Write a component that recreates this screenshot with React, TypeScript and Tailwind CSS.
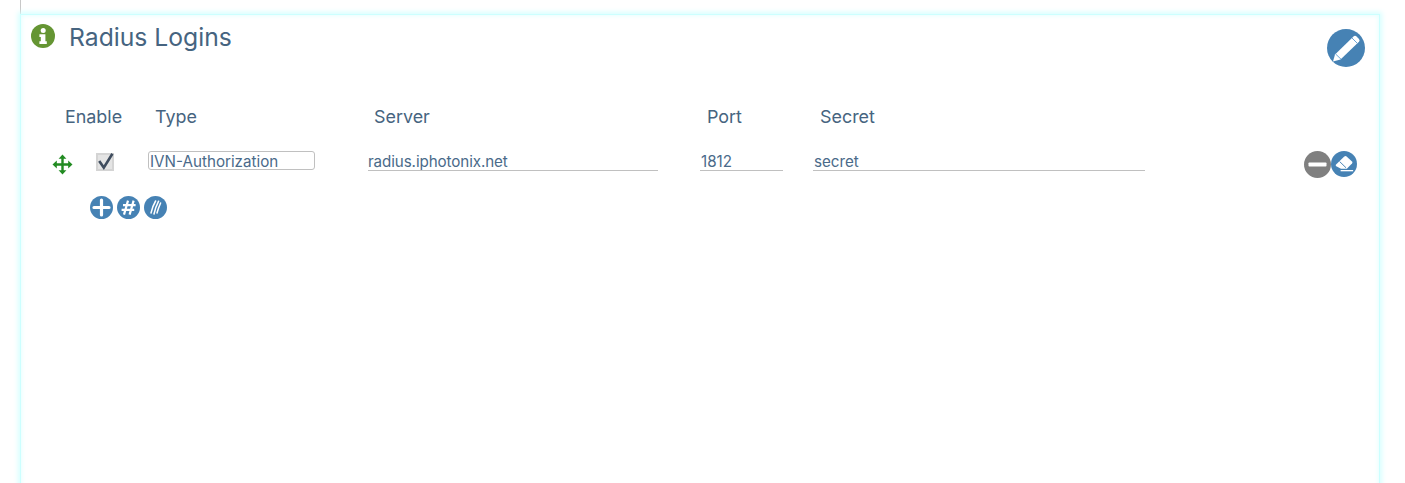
import React from "react";

function Pencil() {
  return (
    <svg viewBox="0 0 38 38" className="w-[38px] h-[38px]">
      <circle cx="19" cy="19" r="19" fill="#4682b4" />
      <path d="M6 32.5 L8 25.5 L26.5 7.5 Q28 6.2 29.5 7.5 L32 10 Q33.2 11.4 32 12.8 L13.5 30.6 Z" fill="#fff" />
      <path d="M8.6 25 L14 30.2 M25 9 L30.4 14.4" stroke="#6aa5d8" strokeWidth="1" fill="none" />
    </svg>
  );
}

function Info() {
  return (
    <svg viewBox="0 0 24 24" className="w-[24px] h-[24px] shrink-0">
      <circle cx="12" cy="12" r="12" fill="#659533" />
      <circle cx="12.2" cy="6.4" r="2.5" fill="#fff" />
      <path d="M8.4 10.2 H14.4 V17.2 H15.8 V20 H8.4 V17.2 H9.8 V13 H8.4 Z" fill="#fff" />
    </svg>
  );
}

function Move() {
  return (
    <svg viewBox="0 0 21 21" className="w-[21px] h-[21px]">
      <path d="M10.5 2 V19 M2 10.5 H19" stroke="#228b22" strokeWidth="2.4" fill="none" />
      <path d="M10.5 0.5 L14.4 4.8 H6.6 Z M10.5 20.5 L14.4 16.2 H6.6 Z M0.5 10.5 L4.8 6.6 V14.4 Z M20.5 10.5 L16.2 6.6 V14.4 Z" fill="#228b22" />
    </svg>
  );
}

function Eraser() {
  return (
    <svg viewBox="0 0 27 27" className="w-[26px] h-[26px] shrink-0">
      <circle cx="13.5" cy="13.5" r="13.5" fill="#4682b4" />
      <path d="M5 14.4 L13.8 5.8 Q15 4.8 16.2 5.8 L21.8 10.8 Q22.8 11.9 21.8 13 L16.4 18.4 H10.4 L5 15.6 Z" fill="#fff" />
      <path d="M9 11 L15.6 17.4" stroke="#4682b4" strokeWidth="1" fill="none" />
      <path d="M10 20.4 H23" stroke="#fff" strokeWidth="1.4" fill="none" />
    </svg>
  );
}

function Minus() {
  return (
    <svg viewBox="0 0 27 27" className="w-[27px] h-[27px] shrink-0">
      <circle cx="13.5" cy="13.5" r="13.5" fill="#808080" />
      <rect x="4.5" y="11.5" width="18" height="4" rx="0.8" fill="#fff" />
    </svg>
  );
}

function Plus() {
  return (
    <svg viewBox="0 0 23 23" className="w-[23px] h-[23px] shrink-0">
      <circle cx="11.5" cy="11.5" r="11.5" fill="#4682b4" />
      <path d="M4 11.5 H19 M11.5 4 V19" stroke="#fff" strokeWidth="3.2" fill="none" strokeLinecap="round" />
    </svg>
  );
}

function Hash() {
  return (
    <svg viewBox="0 0 23 23" className="w-[23px] h-[23px] shrink-0">
      <circle cx="11.5" cy="11.5" r="11.5" fill="#4682b4" />
      <path d="M11 4.6 L7 18.6 M16.6 4.6 L12.6 18.6 M6 9.2 H18.6 M4.6 13.8 H17.2" stroke="#fff" strokeWidth="2.2" fill="none" />
    </svg>
  );
}

function Slashes() {
  return (
    <svg viewBox="0 0 23 23" className="w-[23px] h-[23px] shrink-0">
      <circle cx="11.5" cy="11.5" r="11.5" fill="#4682b4" />
      <path d="M7 17 Q8.6 10 11.6 5 M10 18 Q11.6 11 14.6 5.2 M13 17 Q14.4 12 16.6 7" stroke="#fff" strokeWidth="1.5" strokeLinecap="round" fill="none" />
    </svg>
  );
}

export default function App() {
  const fieldText = "text-[15.2px] leading-[18px] text-[#4a6a8a] bg-transparent outline-none";
  return (
    <div className="h-[483px] overflow-hidden bg-white font-['Inter',sans-serif] text-[#466480]">
      <div className="ml-5 w-px h-[14px] bg-[#c8c8c8]" />
      <div className="ml-5 w-[1360px] h-[520px] pr-[12px] border border-[#ccffff] bg-white shadow-[0_0_5px_2px_#d8ffff,inset_0_0_4px_1px_#e6ffff]">
        <div className="flex justify-between">
          <div className="flex items-start pl-[10px] pt-[9px]">
            <Info />
            <h1 className="ml-[14px] -mt-[2px] text-[24.7px] leading-[30px] font-normal">Radius Logins</h1>
          </div>
          <div className="pt-[14px] pr-[2px]"><Pencil /></div>
        </div>
        <div className="flex mt-[35px] h-[30px] items-center text-[17.9px] leading-[24px]">
          <span className="ml-[44px] w-[90px]">Enable</span>
          <span className="w-[219px]">Type</span>
          <span className="w-[333px]">Server</span>
          <span className="w-[113px]">Port</span>
          <span>Secret</span>
        </div>
        <div className="flex items-center mt-[17px] h-[24px]">
          <span className="ml-[31px] mt-[6px]"><Move /></span>
          <span className="ml-[23px] mt-[2px] w-[18px] h-[18px] bg-[#e4e4e4] border-2 border-[#d4d4d4] relative">
            <svg viewBox="0 0 18 18" className="absolute -left-[2px] -top-[2px] w-[18px] h-[18px]"><path d="M3.2 8 L7.8 14.6 L16.4 0.8" stroke="#3f4d5e" strokeWidth="2.6" fill="none" /></svg>
          </span>
          <input readOnly value="IVN-Authorization" className={`ml-[34px] -mt-[1px] h-[19px] w-[167px] pl-[1px] pt-[1px] border border-[#c0c0c0] rounded-[3px] ${fieldText}`} />
          <input readOnly value="radius.iphotonix.net" className={`ml-[53px] h-[20px] pt-[1px] w-[290px] border-b border-[#c0c0c0] tracking-[-0.1px] ${fieldText}`} />
          <input readOnly value="1812" className={`ml-[42px] h-[20px] pt-[1px] pl-[1px] w-[83px] border-b border-[#c0c0c0] ${fieldText}`} />
          <input readOnly value="secret" className={`ml-[30px] h-[20px] pt-[1px] pl-[1px] w-[332px] border-b border-[#c0c0c0] ${fieldText}`} />
          <span className="ml-[159px] mt-[6px] flex items-center">
            <Minus />
            <Eraser />
          </span>
        </div>
        <div className="flex items-center gap-[4px] ml-[69px] mt-[23px]">
          <Plus />
          <Hash />
          <Slashes />
        </div>
      </div>
    </div>
  );
}
